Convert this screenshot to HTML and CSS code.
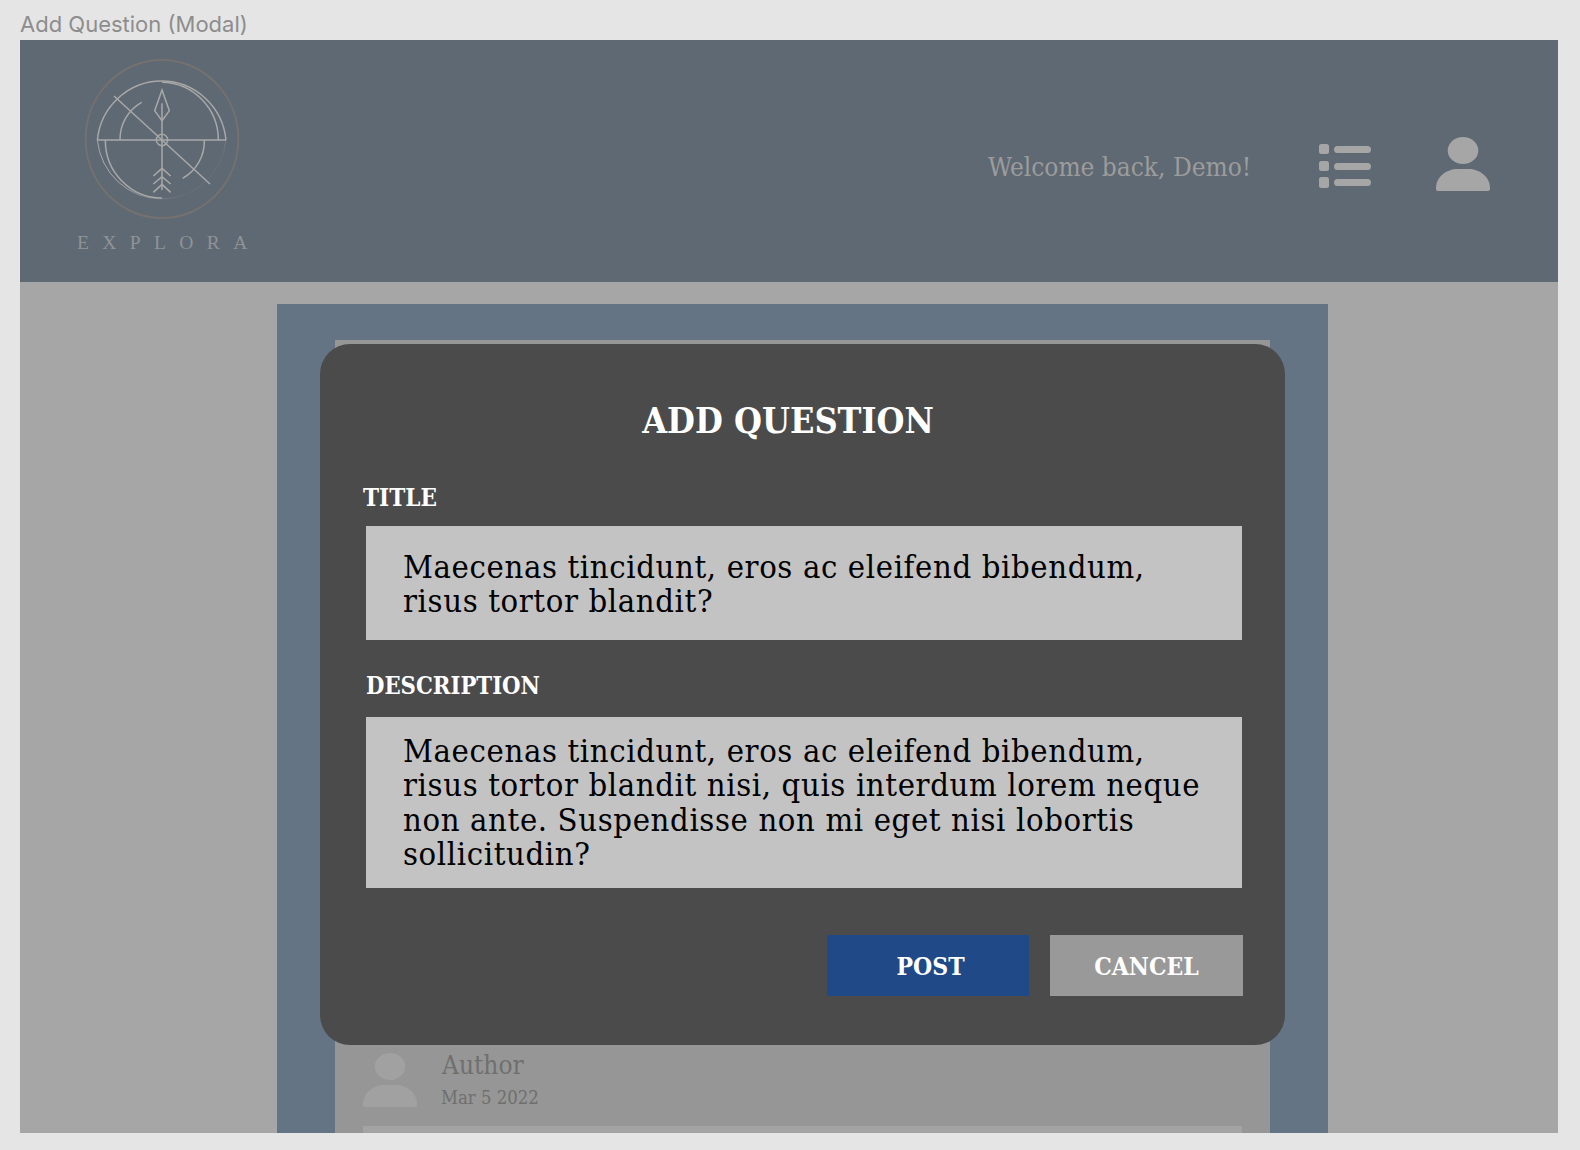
FILE: index.html
```html
<!DOCTYPE html>
<html lang="en">
<head>
  <meta charset="UTF-8">
  <title>Add Question (Modal)</title>
  <link rel="stylesheet" href="styles.css">
</head>
<body>
  <div class="frame-label">Add Question (Modal)</div>
  <div class="frame">
    <header class="topbar">
      <div class="brand">
        <svg class="logo" viewBox="0 0 660 579" fill="none">
          <defs>
            <linearGradient id="fade" x1="0" y1="0" x2="1" y2="0.5">
              <stop offset="0.45" stop-color="#a8a8a8"/>
              <stop offset="0.9" stop-color="#a8a8a8" stop-opacity="0.1"/>
            </linearGradient>
          </defs>
          <ellipse cx="306" cy="297" rx="229" ry="237" stroke="#74716f" stroke-width="6"/>
          <g stroke="#a8a8a8" stroke-width="4.5">
            <path d="M112 300A194 197 0 0 1 498 300"/>
            <path d="M306 127A172 173 0 0 1 475 300"/>
            <path d="M136 300A170 173 0 0 0 306 474"/>
            <path d="M112 300H498"/>
            <path d="M180 300A127 127 0 0 1 245 187"/>
            <path d="M433 300A127 127 0 0 1 368 415"/>
            <path d="M306 190V450"/>
            <path d="M162 168L450 432"/>
            <circle cx="306" cy="300" r="17"/>
            <path d="M306 150L328 212L306 242L284 212Z"/>
            <path d="M280 408L306 385L332 408M280 432L306 410L332 432M280 457L306 433L332 457"/>
          </g>
          <path d="M112 300A194 197 0 0 0 498 300" stroke="url(#fade)" stroke-width="3"/>
        </svg>
        <div class="brand-name">EXPLORA</div>
      </div>
      <div class="topbar-right">
        <span class="welcome">Welcome back, Demo!</span>
        <svg class="list-icon" viewBox="0 0 52 44" fill="#a6a6a6">
          <rect x="0" y="0" width="10" height="10" rx="2.5"/>
          <rect x="0" y="17" width="10" height="10" rx="2.5"/>
          <rect x="0" y="33" width="10" height="11" rx="2.5"/>
          <rect x="15" y="2" width="37" height="7" rx="3.5"/>
          <rect x="15" y="19" width="37" height="7" rx="3.5"/>
          <rect x="15" y="35" width="37" height="7" rx="3.5"/>
        </svg>
        <svg class="user-icon" viewBox="0 0 54 54" fill="#a6a6a6">
          <ellipse cx="27" cy="13.5" rx="15.3" ry="13.5"/>
          <path d="M0 51C0 40 10 32 22 32H32C44 32 54 40 54 51V52Q54 54 52 54H2Q0 54 0 52Z"/>
        </svg>
      </div>
    </header>

    <main class="backdrop">
      <section class="panel">
        <div class="question-card">
          <div class="author-row">
            <svg class="author-avatar" viewBox="0 0 54 54" fill="#a1a1a1">
              <ellipse cx="27" cy="13.5" rx="15.3" ry="13.5"/>
              <path d="M0 51C0 40 10 32 22 32H32C44 32 54 40 54 51V52Q54 54 52 54H2Q0 54 0 52Z"/>
            </svg>
            <div>
              <div class="author-name">Author</div>
              <div class="author-date">Mar 5 2022</div>
            </div>
          </div>
          <div class="question-body"></div>
        </div>
      </section>

      <form class="modal">
        <h2 class="modal-title">ADD QUESTION</h2>
        <div class="field-label field-label-title">TITLE</div>
        <div class="field field-title">Maecenas tincidunt, eros ac eleifend bibendum,<br>risus tortor blandit?</div>
        <div class="field-label field-label-desc">DESCRIPTION</div>
        <div class="field field-desc">Maecenas tincidunt, eros ac eleifend bibendum,<br>risus tortor blandit nisi, quis interdum lorem neque<br>non ante. Suspendisse non mi eget nisi lobortis<br>sollicitudin?</div>
        <div class="modal-actions">
          <button type="button" class="btn btn-post">POST</button>
          <button type="button" class="btn btn-cancel">CANCEL</button>
        </div>
      </form>
    </main>
  </div>
</body>
</html>
```

FILE: styles.css
```css
* {
  box-sizing: border-box;
}
html, body {
  height: 100%;
}
body {
  margin: 0;
  background: #e5e5e5;
  overflow: hidden;
  font-family: 'DejaVu Serif Condensed', 'DejaVu Serif', serif;
}
.frame-label {
  height: 40px;
  padding: 11px 0 0 20px;
  font-family: Inter, sans-serif;
  font-size: 22px;
  line-height: 26px;
  color: #8d8d8d;
}
.frame {
  position: relative;
  width: 1538px;
  height: 1093px;
  margin-left: 20px;
  background: #a6a6a6;
  overflow: hidden;
}
.topbar {
  display: flex;
  justify-content: space-between;
  height: 242px;
  padding: 0 68px 0 57px;
  background: #5f6973;
}
.brand {
  width: 172px;
}
.logo {
  display: block;
  width: 220px;
  height: 193px;
  margin: 0 0 0 -17px;
}
.brand-name {
  font-family: 'Liberation Serif', serif;
  font-size: 19.5px;
  line-height: 20px;
  letter-spacing: 13.4px;
  white-space: nowrap;
  color: #8f9397;
}
.topbar-right {
  display: flex;
  align-items: flex-start;
  padding-top: 97px;
}
.welcome {
  width: 331px;
  margin-top: 13px;
  font-size: 26px;
  line-height: 34px;
  font-weight: 300;
  color: #9c9c9c;
}
.list-icon {
  width: 52px;
  height: 44px;
  margin-top: 7px;
}
.user-icon {
  width: 54px;
  height: 54px;
  margin-left: 65px;
}
.backdrop {
  padding: 22px 230px 0 257px;
}
.panel {
  height: 830px;
  padding: 36px 58px 0;
  background: #647485;
}
.question-card {
  height: 794px;
  background: #969696;
  padding: 707px 28px 0;
}
.author-row {
  display: flex;
  gap: 25px;
}
.author-avatar {
  width: 54px;
  height: 54px;
  margin-top: 6px;
}
.author-name {
  margin-top: 1px;
  font-size: 26px;
  line-height: 34px;
  font-weight: 300;
  color: #6f6f6f;
}
.author-date {
  margin-left: -1px;
  font-size: 18.4px;
  line-height: 32px;
  color: #6f6f6f;
}
.question-body {
  height: 30px;
  margin-top: 12px;
  background: #a3a3a3;
}
.modal {
  position: absolute;
  left: 300px;
  top: 304px;
  width: 965px;
  height: 701px;
  padding: 53px 43px 0 43px;
  border-radius: 30px;
  background: #4b4b4b;
}
.modal-title {
  margin: 0;
  padding-right: 29px;
  text-align: center;
  font-size: 35.7px;
  line-height: 46px;
  font-weight: 700;
  color: #fff;
}
.field-label {
  font-size: 24px;
  line-height: 30px;
  font-weight: 700;
  color: #fff;
}
.field-label-title {
  margin-top: 40px;
}
.field-label-desc {
  margin: 31px 0 0 3px;
  font-size: 23.6px;
}
.field {
  margin-left: 3px;
  padding: 24px 37px 0;
  background: #c3c3c3;
  font-size: 32.5px;
  line-height: 34.3px;
  letter-spacing: 0.62px;
  color: #000;
}
.field-title {
  height: 114px;
  margin-top: 13px;
}
.field-desc {
  height: 171px;
  margin-top: 16px;
  padding-top: 17px;
}
.modal-actions {
  display: flex;
  justify-content: flex-end;
  gap: 21px;
  margin-top: 47px;
  margin-right: -1px;
}
.btn {
  height: 61px;
  padding: 2px 0 0;
  border: none;
  font-family: inherit;
  font-size: 24.5px;
  font-weight: 700;
  color: #fff;
}
.btn-post {
  width: 202px;
  padding-left: 5px;
  background: #1f4a87;
}
.btn-cancel {
  width: 193px;
  background: #999;
}
```
